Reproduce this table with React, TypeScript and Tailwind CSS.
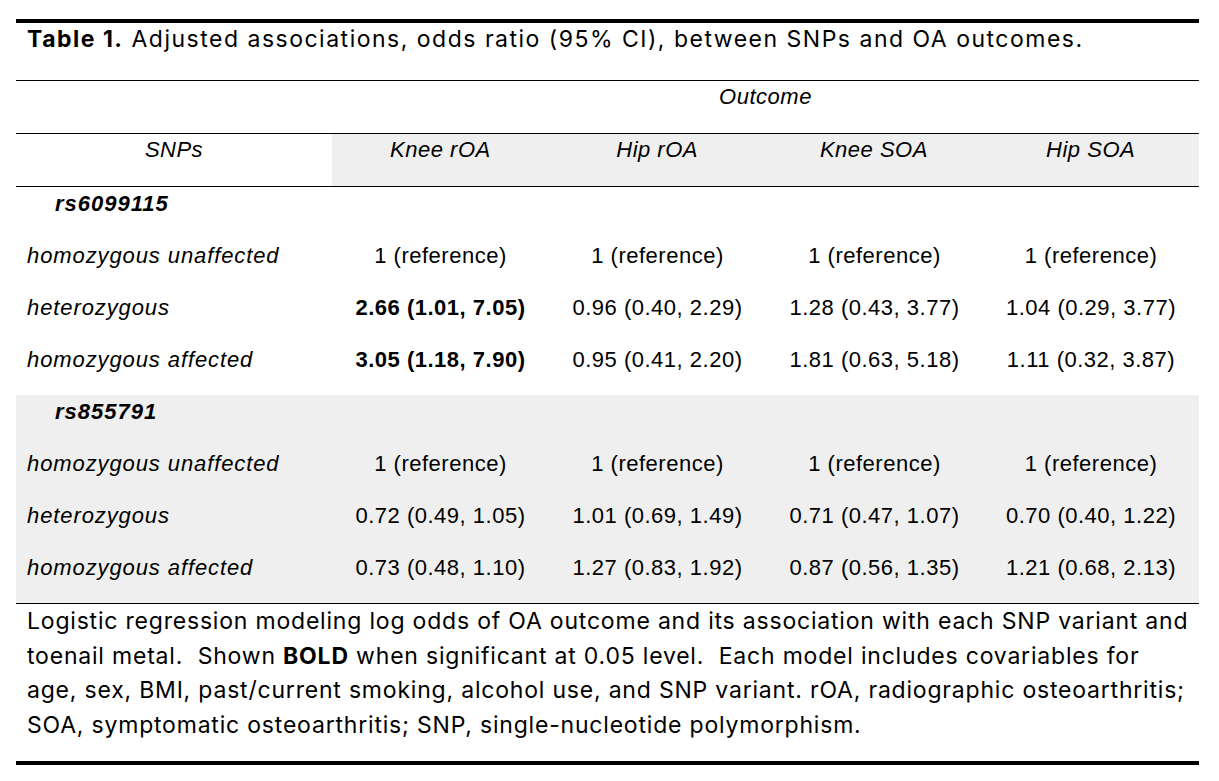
const rows1 = [
  { label: 'homozygous unaffected', vals: ['1 (reference)', '1 (reference)', '1 (reference)', '1 (reference)'], bold: [] as number[] },
  { label: 'heterozygous', vals: ['2.66 (1.01, 7.05)', '0.96 (0.40, 2.29)', '1.28 (0.43, 3.77)', '1.04 (0.29, 3.77)'], bold: [0] },
  { label: 'homozygous affected', vals: ['3.05 (1.18, 7.90)', '0.95 (0.41, 2.20)', '1.81 (0.63, 5.18)', '1.11 (0.32, 3.87)'], bold: [0] },
];

const rows2 = [
  { label: 'homozygous unaffected', vals: ['1 (reference)', '1 (reference)', '1 (reference)', '1 (reference)'], bold: [] as number[] },
  { label: 'heterozygous', vals: ['0.72 (0.49, 1.05)', '1.01 (0.69, 1.49)', '0.71 (0.47, 1.07)', '0.70 (0.40, 1.22)'], bold: [] as number[] },
  { label: 'homozygous affected', vals: ['0.73 (0.48, 1.10)', '1.27 (0.83, 1.92)', '0.87 (0.56, 1.35)', '1.21 (0.68, 2.13)'], bold: [] as number[] },
];

const heads = ['Knee rOA', 'Hip rOA', 'Knee SOA', 'Hip SOA'];

const grid = 'grid grid-cols-[316px_217px_217px_217px_216px]';
const cell = "font-['Liberation_Sans',Arial,sans-serif] text-[22px] leading-[26px] tracking-[0.5px]";
const aptos = "font-['Inter',sans-serif] text-[23px]";

type Row = { label: string; vals: string[]; bold: number[] };

const DataRow = ({ row }: { row: Row }) => (
  <div className={`${grid} h-[52px] pt-[4px]`}>
    <div className={`${cell} italic pl-[11px] tracking-[0.9px]`}>{row.label}</div>
    {row.vals.map((v, i) => (
      <div key={i} className={`${cell} text-center ${row.bold.includes(i) ? 'font-bold' : ''}`}>
        {v}
      </div>
    ))}
  </div>
);

const SnpRow = ({ name }: { name: string }) => (
  <div className="h-[52px] pt-[4px]">
    <div className={`${cell} italic font-bold pl-[39px] tracking-[1px]`}>{name}</div>
  </div>
);

export default function App() {
  return (
    <div className="w-[1219px] h-[781px] bg-white text-black pt-[19px]">
      <div className="ml-[16px] w-[1183px]">
        <div className="border-t-4 border-black h-[61px] pt-[3px] pl-[11px]">
          <p className={`${aptos} leading-[26px] tracking-[1.5px]`}>
            <span className="font-bold">Table 1.</span> Adjusted associations, odds ratio (95% CI), between SNPs and OA outcomes.
          </p>
        </div>

        <div className={`${grid} border-t border-black h-[53px] pt-[3px]`}>
          <div />
          <div className={`${cell} italic text-center col-span-4`}>Outcome</div>
        </div>

        <div className={`${grid} border-t border-b border-black h-[54px]`}>
          <div className={`${cell} italic text-center pt-[3px]`}>SNPs</div>
          <div className="col-span-4 grid grid-cols-4 bg-[#efefef]">
            {heads.map((h) => (
              <div key={h} className={`${cell} italic text-center pt-[3px]`}>
                {h}
              </div>
            ))}
          </div>
        </div>

        <div>
          <SnpRow name="rs6099115" />
          {rows1.map((r) => (
            <DataRow key={r.label} row={r} />
          ))}
        </div>

        <div className="bg-[#efefef]">
          <SnpRow name="rs855791" />
          {rows2.map((r) => (
            <DataRow key={r.label} row={r} />
          ))}
        </div>

        <div className={`border-t border-black pl-[11px] pb-[19px] ${aptos} leading-[34.5px] tracking-[0.8px]`}>
          <p className="whitespace-pre">Logistic regression modeling log odds of OA outcome and its association with each SNP variant and</p>
          <p className="whitespace-pre">
            toenail metal.  Shown <span className="font-bold">BOLD</span> when significant at 0.05 level.  Each model includes covariables for
          </p>
          <p className="whitespace-pre">age, sex, BMI, past/current smoking, alcohol use, and SNP variant. rOA, radiographic osteoarthritis;</p>
          <p className="whitespace-pre">SOA, symptomatic osteoarthritis; SNP, single-nucleotide polymorphism.</p>
        </div>

        <div className="border-t-4 border-black" />
      </div>
    </div>
  );
}
